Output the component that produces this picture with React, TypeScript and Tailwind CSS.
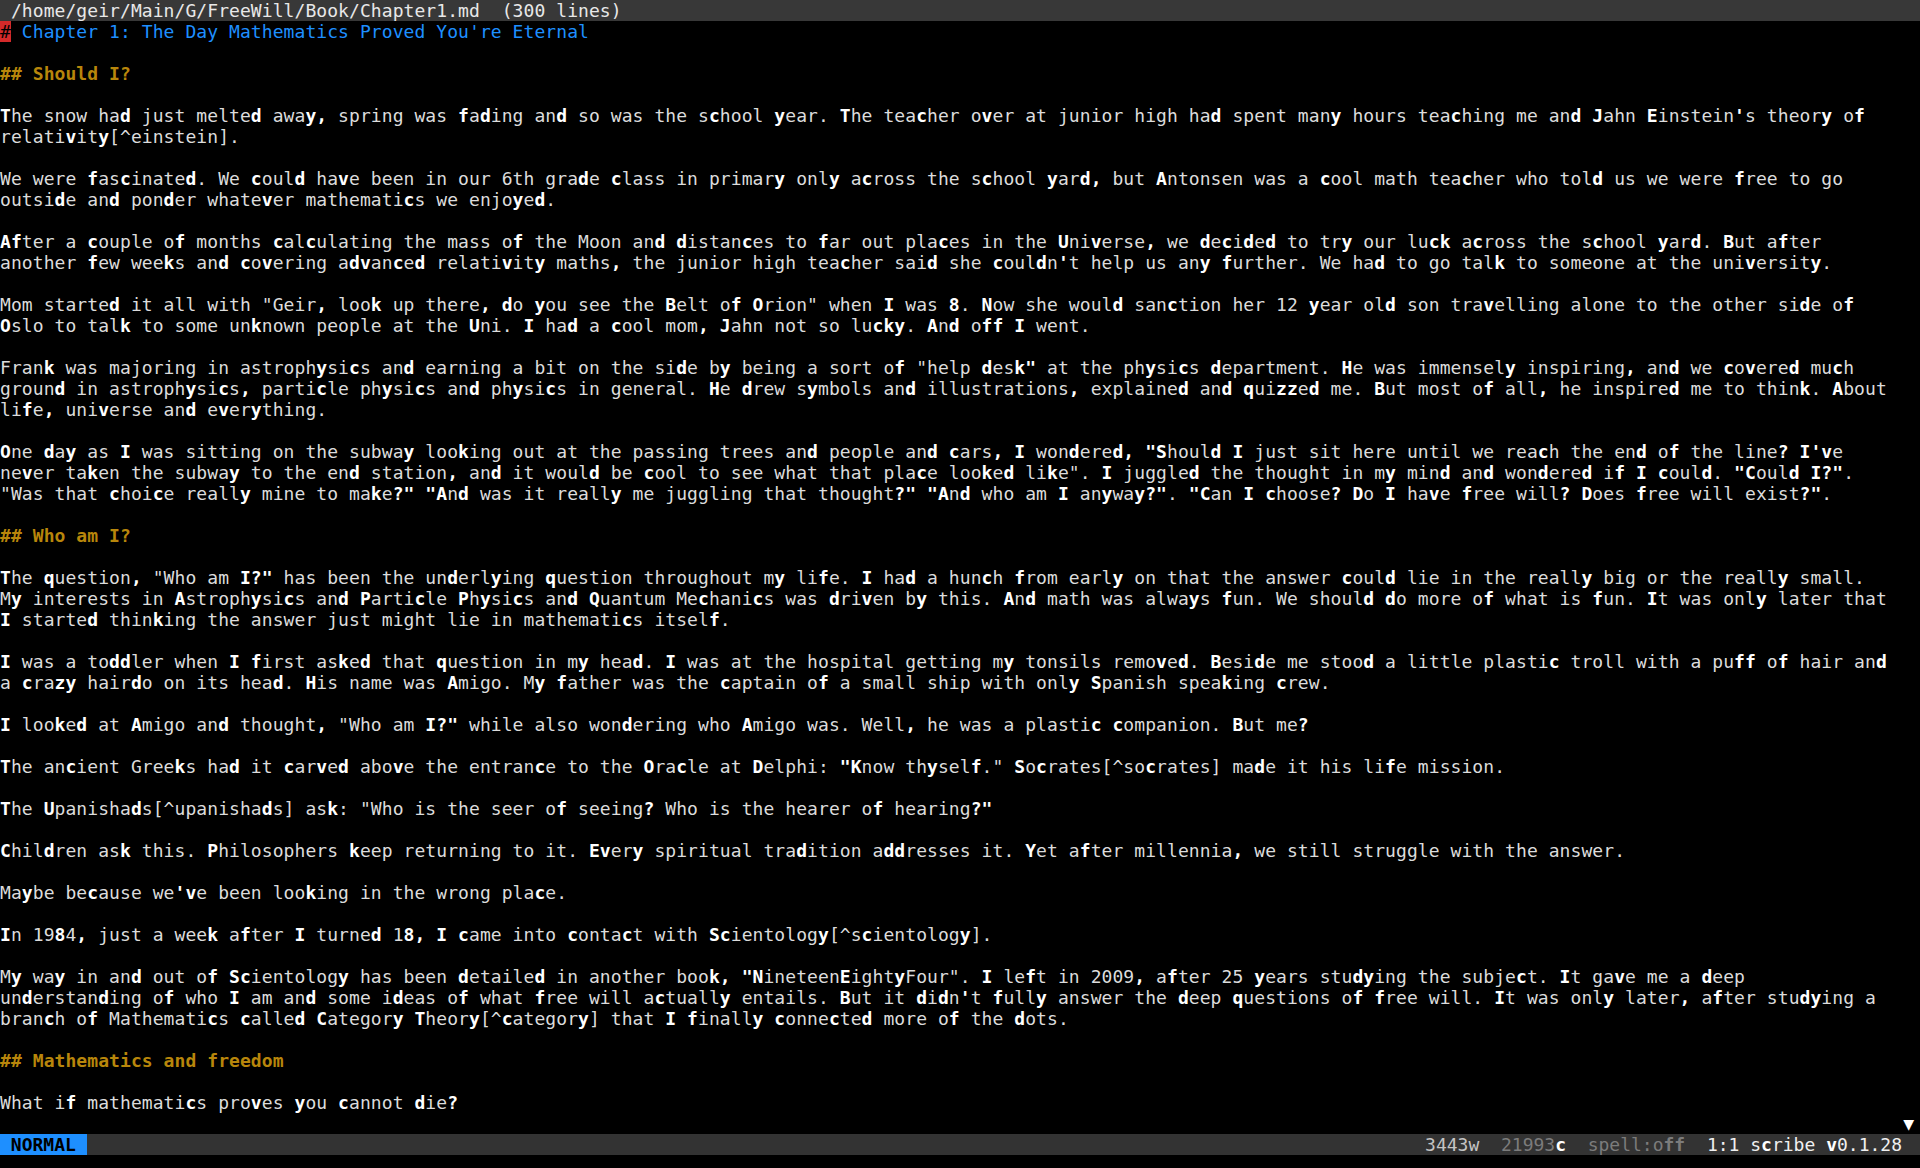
import React from "react";

const BOLD = new Set("dyfckqvzTIOABJENUPQHSCDYK8?,'".split(""));

function isBold(line: string, i: number): boolean {
  const ch = line[i];
  if (BOLD.has(ch)) return true;
  if (ch === '"') {
    const prev = line[i - 1];
    const next = line[i + 1];
    if (prev && prev !== "," && BOLD.has(prev)) return true;
    if (next && BOLD.has(next)) return true;
  }
  return false;
}

const CELL = "w-[10.909px] shrink-0";
const CELL_BOLD = "w-[10.909px] shrink-0 font-bold text-white";

function Cells({ text, mixed }: { text: string; mixed?: boolean }) {
  const out: React.ReactNode[] = [];
  for (let i = 0; i < text.length; i++) {
    const b = mixed ? isBold(text, i) : false;
    out.push(
      <span key={i} className={b ? CELL_BOLD : CELL}>
        {text[i]}
      </span>
    );
  }
  return <>{out}</>;
}

type Row = { kind: "body" | "h2" | "blank"; text?: string };

const rows: Row[] = [
  { kind: "blank" },
  { kind: "h2", text: "## Should I?" },
  { kind: "blank" },
  { kind: "body", text: "The snow had just melted away, spring was fading and so was the school year. The teacher over at junior high had spent many hours teaching me and Jahn Einstein's theory of" },
  { kind: "body", text: "relativity[^einstein]." },
  { kind: "blank" },
  { kind: "body", text: "We were fascinated. We could have been in our 6th grade class in primary only across the school yard, but Antonsen was a cool math teacher who told us we were free to go" },
  { kind: "body", text: "outside and ponder whatever mathematics we enjoyed." },
  { kind: "blank" },
  { kind: "body", text: "After a couple of months calculating the mass of the Moon and distances to far out places in the Universe, we decided to try our luck across the school yard. But after" },
  { kind: "body", text: "another few weeks and covering advanced relativity maths, the junior high teacher said she couldn't help us any further. We had to go talk to someone at the university." },
  { kind: "blank" },
  { kind: "body", text: 'Mom started it all with "Geir, look up there, do you see the Belt of Orion" when I was 8. Now she would sanction her 12 year old son travelling alone to the other side of' },
  { kind: "body", text: "Oslo to talk to some unknown people at the Uni. I had a cool mom, Jahn not so lucky. And off I went." },
  { kind: "blank" },
  { kind: "body", text: 'Frank was majoring in astrophysics and earning a bit on the side by being a sort of "help desk" at the physics department. He was immensely inspiring, and we covered much' },
  { kind: "body", text: "ground in astrophysics, particle physics and physics in general. He drew symbols and illustrations, explained and quizzed me. But most of all, he inspired me to think. About" },
  { kind: "body", text: "life, universe and everything." },
  { kind: "blank" },
  { kind: "body", text: 'One day as I was sitting on the subway looking out at the passing trees and people and cars, I wondered, "Should I just sit here until we reach the end of the line? I\'ve' },
  { kind: "body", text: 'never taken the subway to the end station, and it would be cool to see what that place looked like". I juggled the thought in my mind and wondered if I could. "Could I?".' },
  { kind: "body", text: '"Was that choice really mine to make?" "And was it really me juggling that thought?" "And who am I anyway?". "Can I choose? Do I have free will? Does free will exist?".' },
  { kind: "blank" },
  { kind: "h2", text: "## Who am I?" },
  { kind: "blank" },
  { kind: "body", text: 'The question, "Who am I?" has been the underlying question throughout my life. I had a hunch from early on that the answer could lie in the really big or the really small.' },
  { kind: "body", text: "My interests in Astrophysics and Particle Physics and Quantum Mechanics was driven by this. And math was always fun. We should do more of what is fun. It was only later that" },
  { kind: "body", text: "I started thinking the answer just might lie in mathematics itself." },
  { kind: "blank" },
  { kind: "body", text: "I was a toddler when I first asked that question in my head. I was at the hospital getting my tonsils removed. Beside me stood a little plastic troll with a puff of hair and" },
  { kind: "body", text: "a crazy hairdo on its head. His name was Amigo. My father was the captain of a small ship with only Spanish speaking crew." },
  { kind: "blank" },
  { kind: "body", text: 'I looked at Amigo and thought, "Who am I?" while also wondering who Amigo was. Well, he was a plastic companion. But me?' },
  { kind: "blank" },
  { kind: "body", text: 'The ancient Greeks had it carved above the entrance to the Oracle at Delphi: "Know thyself." Socrates[^socrates] made it his life mission.' },
  { kind: "blank" },
  { kind: "body", text: 'The Upanishads[^upanishads] ask: "Who is the seer of seeing? Who is the hearer of hearing?"' },
  { kind: "blank" },
  { kind: "body", text: "Children ask this. Philosophers keep returning to it. Every spiritual tradition addresses it. Yet after millennia, we still struggle with the answer." },
  { kind: "blank" },
  { kind: "body", text: "Maybe because we've been looking in the wrong place." },
  { kind: "blank" },
  { kind: "body", text: "In 1984, just a week after I turned 18, I came into contact with Scientology[^scientology]." },
  { kind: "blank" },
  { kind: "body", text: 'My way in and out of Scientology has been detailed in another book, "NineteenEightyFour". I left in 2009, after 25 years studying the subject. It gave me a deep' },
  { kind: "body", text: "understanding of who I am and some ideas of what free will actually entails. But it didn't fully answer the deep questions of free will. It was only later, after studying a" },
  { kind: "body", text: "branch of Mathematics called Category Theory[^category] that I finally connected more of the dots." },
  { kind: "blank" },
  { kind: "h2", text: "## Mathematics and freedom" },
  { kind: "blank" },
  { kind: "body", text: "What if mathematics proves you cannot die?" },
];

export default function App() {
  return (
    <div
      className="w-[1920px] h-[1168px] bg-black overflow-hidden text-[18px]"
      style={{ fontFamily: '"DejaVu Sans Mono", "Liberation Mono", monospace' }}
    >
      {/* title bar */}
      <div className="h-[21px] leading-[21px] flex whitespace-pre bg-[#383838] text-[#e8e8e8]">
        <Cells text=" /home/geir/Main/G/FreeWill/Book/Chapter1.md  (300 lines)" />
      </div>
      {/* h1 */}
      <div className="h-[21px] leading-[21px] flex whitespace-pre text-[#1e8fff]">
        <span className="w-[10.909px] shrink-0 bg-[#d42a2a] text-black">#</span>
        <Cells text=" Chapter 1: The Day Mathematics Proved You're Eternal" />
      </div>
      {rows.map((r, i) =>
        r.kind === "blank" ? (
          <div key={i} className="h-[21px]" />
        ) : r.kind === "h2" ? (
          <div key={i} className="h-[21px] leading-[21px] flex whitespace-pre font-bold text-[#b8860b]">
            <Cells text={r.text || ""} />
          </div>
        ) : (
          <div key={i} className="h-[21px] leading-[21px] flex whitespace-pre text-[#dcdcdc]">
            <Cells text={r.text || ""} mixed />
          </div>
        )
      )}
      {/* scroll indicator */}
      <div className="h-[21px] leading-[21px] flex justify-end pr-[6px] text-white">▼</div>
      {/* status bar */}
      <div className="h-[21px] leading-[21px] whitespace-pre bg-[#333333] flex justify-between">
        <span className="bg-[#1e8fff] text-black font-bold">{" NORMAL "}</span>
        <span className="pr-[18px]">
          <span className="text-[#c4c4c4]">3443w</span>
          <span>{"  "}</span>
          <span className="text-[#7c7c7c]">21993</span>
          <span className="text-white font-bold">c</span>
          <span>{"  "}</span>
          <span className="text-[#7c7c7c]">spell:o</span>
          <span className="text-[#7c7c7c] font-bold">ff</span>
          <span>{"  "}</span>
          <span className="text-[#f0f0f0]">1:1 s</span>
          <span className="text-white font-bold">c</span>
          <span className="text-[#f0f0f0]">ribe </span>
          <span className="text-white font-bold">v</span>
          <span className="text-[#f0f0f0]">0.1.28</span>
        </span>
      </div>
    </div>
  );
}
